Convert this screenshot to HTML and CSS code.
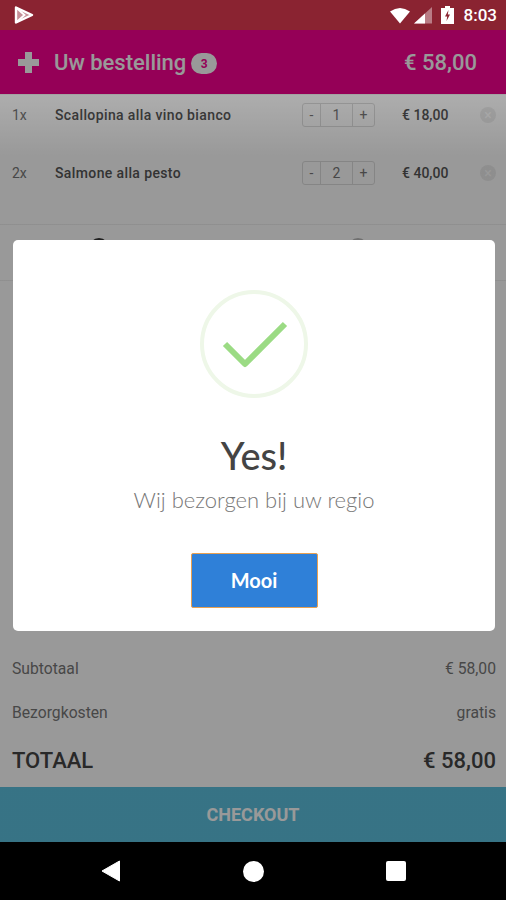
FILE: index.html
```html
<!DOCTYPE html>
<html lang="nl">

<head>
    <meta charset="UTF-8">
    <meta name="viewport" content="width=device-width, initial-scale=1.0">
    <title>Uw bestelling</title>
    <link rel="stylesheet" href="styles.css">
</head>

<body>
    <div class="status-bar">
        <svg class="store-icon" width="20" height="18" viewBox="0 0 20 18">
            <path d="M2 1.5 L18 9 L2 16.5 Z" fill="#c58f97" stroke="#fff" stroke-width="2.4" stroke-linejoin="round"/>
            <path d="M2.5 2 L10.5 9 L2.5 16" fill="none" stroke="#fff" stroke-width="1.8"/>
        </svg>
        <div class="status-right">
            <svg width="22" height="17" viewBox="0 0 22 17">
                <path d="M1 4.5 Q11 -2.5 21 4.5 L11 16.5 Z" fill="#fff"/>
            </svg>
            <svg width="18" height="17" viewBox="0 0 18 17">
                <path d="M0 16.5 L18 0 V16.5 Z" fill="#b97c85"/>
                <path d="M0 16.5 L11 6.4 V16.5 Z" fill="#fff"/>
            </svg>
            <svg class="battery" width="13" height="18" viewBox="0 0 13 18">
                <path d="M4 0 H9 V2 H13 V18 H0 V2 H4 Z" fill="#fff"/>
                <path d="M7.5 4 L4 10.5 H6.2 L5.5 15 L9 8.5 H6.8 Z" fill="#8a2331"/>
            </svg>
            <span class="clock">8:03</span>
        </div>
    </div>

    <div class="screen">
        <header class="order-header">
            <div class="plus-icon"></div>
            <h1>Uw bestelling</h1>
            <span class="badge">3</span>
            <span class="header-total">€ 58,00</span>
        </header>

        <main class="content">
            <section class="items">
                <div class="item">
                    <span class="item-qty">1x</span>
                    <span class="item-name">Scallopina alla vino bianco</span>
                    <div class="stepper">
                        <span class="step-btn">-</span>
                        <span class="step-value">1</span>
                        <span class="step-btn step-plus">+</span>
                    </div>
                    <span class="item-price">€ 18,00</span>
                    <span class="remove">×</span>
                </div>
                <div class="item">
                    <span class="item-qty">2x</span>
                    <span class="item-name">Salmone alla pesto</span>
                    <div class="stepper">
                        <span class="step-btn">-</span>
                        <span class="step-value">2</span>
                        <span class="step-btn step-plus">+</span>
                    </div>
                    <span class="item-price">€ 40,00</span>
                    <span class="remove">×</span>
                </div>
            </section>

            <!-- rij zit bijna helemaal achter de modal -->
            <section class="options">
                <span class="option-dot"></span>
                <span class="option-dot option-dot-off"></span>
            </section>

            <section class="summary">
                <div class="summary-row">
                    <span>Subtotaal</span>
                    <span>€ 58,00</span>
                </div>
                <div class="summary-row">
                    <span>Bezorgkosten</span>
                    <span>gratis</span>
                </div>
                <div class="summary-row summary-total">
                    <span>TOTAAL</span>
                    <span>€ 58,00</span>
                </div>
            </section>

            <button class="checkout-btn">CHECKOUT</button>
        </main>

        <div class="overlay">
            <div class="modal">
                <div class="check-circle">
                    <svg width="100" height="100" viewBox="0 0 100 100">
                        <path d="M21 50 L41 70 L81 30" fill="none" stroke="#9bdb84" stroke-width="6" stroke-linejoin="round"/>
                    </svg>
                </div>
                <h2 class="modal-title">Yes!</h2>
                <p class="modal-text">Wij bezorgen bij uw regio</p>
                <button class="modal-btn">Mooi</button>
            </div>
        </div>
    </div>

    <nav class="nav-bar">
        <svg width="20" height="22" viewBox="0 0 20 22"><path d="M18.5 1 V21 L1 11 Z" fill="#fff" stroke="#fff" stroke-linejoin="round"/></svg>
        <div class="nav-home"></div>
        <div class="nav-recent"></div>
    </nav>
</body>

</html>
```

FILE: styles.css
```css
* {
    margin: 0;
    padding: 0;
    box-sizing: border-box;
    font-family: Roboto, 'Liberation Sans', sans-serif;
}

body {
    width: 506px;
    height: 900px;
    display: flex;
    flex-direction: column;
    overflow: hidden;
    background: #000;
}

.status-bar {
    height: 30px;
    flex-shrink: 0;
    background: #8a2331;
    display: flex;
    align-items: center;
    justify-content: space-between;
    padding: 0 9px 0 14px;
}

.status-right {
    display: flex;
    align-items: center;
    gap: 3px;
}

.battery {
    margin: 0 7px 0 6px;
}

.clock {
    color: #fff;
    font-size: 17px;
    font-weight: 500;
}

.screen {
    flex: 1;
    position: relative;
    display: flex;
    flex-direction: column;
    background: #fff;
    min-height: 0;
}

.order-header {
    height: 64px;
    flex-shrink: 0;
    background: #f80091;
    color: #fff;
    display: flex;
    align-items: center;
    padding: 0 29px 0 18px;
}

.plus-icon {
    width: 21px;
    height: 21px;
    background:
        linear-gradient(#fff, #fff) center / 100% 7px no-repeat,
        linear-gradient(#fff, #fff) center / 7px 100% no-repeat;
    margin-right: 15px;
}

.order-header h1 {
    font-size: 22px;
    font-weight: 500;
}

.badge {
    width: 26px;
    height: 21px;
    margin: 3px 0 0 5px;
    border-radius: 11px;
    background: #fff;
    color: #f80091;
    font-size: 12px;
    font-weight: 700;
    display: flex;
    align-items: center;
    justify-content: center;
}

.header-total {
    margin-left: auto;
    font-size: 22px;
    font-weight: 500;
}

.content {
    flex: 1;
    display: flex;
    flex-direction: column;
}

.items {
    height: 131px;
    display: flex;
    flex-direction: column;
    gap: 16px;
    border-bottom: 1px solid #efefef;
}

.item {
    height: 42px;
    display: flex;
    align-items: center;
    padding: 0 10px 0 12px;
    color: #555;
}

.item-qty {
    width: 43px;
    font-size: 14px;
    color: #777;
}

.item-name {
    flex: 1;
    font-size: 14px;
    font-weight: 500;
    letter-spacing: 0.38px;
}

.stepper {
    width: 73px;
    height: 24px;
    display: flex;
    border: 1px solid #ddd;
    border-radius: 3px;
    font-size: 14px;
    color: #777;
}

.step-btn {
    width: 17px;
    display: flex;
    align-items: center;
    justify-content: center;
}

.step-plus {
    width: 21px;
}

.step-value {
    flex: 1;
    display: flex;
    align-items: center;
    justify-content: center;
    border-left: 1px solid #ddd;
    border-right: 1px solid #ddd;
}

.item-price {
    width: 48px;
    margin: 0 30px 0 27px;
    font-size: 14px;
    font-weight: 500;
    white-space: nowrap;
}

.remove {
    width: 16px;
    height: 16px;
    border-radius: 50%;
    background: #ededed;
    color: #fff;
    font-size: 14px;
    line-height: 16px;
    text-align: center;
}

.options {
    height: 56px;
    display: flex;
    gap: 239px;
    padding: 13px 0 0 89px;
    border-bottom: 1px solid #efefef;
}

.option-dot {
    width: 20px;
    height: 20px;
    border-radius: 50%;
    background: #333;
}

.option-dot-off {
    background: #bbb;
}

.summary {
    margin-top: auto;
    padding: 0 10px 0 12px;
    color: #777;
    font-size: 15.7px;
}

.summary-row {
    height: 44px;
    display: flex;
    align-items: center;
    justify-content: space-between;
}

.summary-total {
    height: 53px;
    font-size: 22px;
    font-weight: 500;
    color: #444;
}

.checkout-btn {
    height: 55px;
    flex-shrink: 0;
    border: none;
    background: #5bc0de;
    color: #fff;
    font-size: 18px;
    font-weight: 700;
}

/* bovenste rij is in de screenshot iets lichter */
.overlay {
    position: absolute;
    inset: 0;
    background: linear-gradient(rgba(0, 0, 0, 0.4) 64px, rgba(0, 0, 0, 0.32) 65px, rgba(0, 0, 0, 0.4) 125px);
    padding: 210px 11px 0 13px;
}

.modal {
    height: 391px;
    background: #fff;
    border-radius: 5px;
    display: flex;
    flex-direction: column;
    align-items: center;
    padding-top: 50px;
}

.check-circle {
    width: 108px;
    height: 108px;
    border: 4px solid #eef7e8;
    border-radius: 50%;
}

.modal-title {
    margin-top: 34px;
    font-family: Lato, sans-serif;
    font-size: 38px;
    font-weight: 500;
    color: #444;
}

.modal-text {
    margin-top: 8px;
    font-family: Lato, sans-serif;
    font-size: 22px;
    font-weight: 300;
    color: #777;
}

.modal-btn {
    width: 127px;
    height: 55px;
    margin-top: 40px;
    padding-bottom: 2px;
    background: #2f80d8;
    border: 1px solid #e8a050;
    border-radius: 2px;
    color: #fff;
    font-family: Lato, sans-serif;
    font-size: 20px;
    font-weight: 700;
}

.nav-bar {
    height: 58px;
    flex-shrink: 0;
    background: #000;
    display: flex;
    align-items: center;
    justify-content: space-between;
    padding: 0 100px 0 101px;
}

.nav-home {
    width: 21px;
    height: 21px;
    border-radius: 50%;
    background: #fff;
}

.nav-recent {
    width: 20px;
    height: 20px;
    border-radius: 2px;
    background: #fff;
}
```
